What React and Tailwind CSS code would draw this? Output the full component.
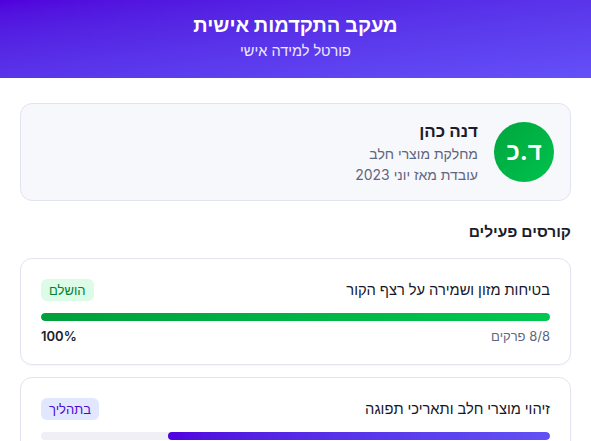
import React from 'react';

const courses = [
  {
    title: 'בטיחות מזון ושמירה על רצף הקור',
    status: 'הושלם',
    done: true,
    chapters: '8/8 פרקים',
    percent: 100,
  },
  {
    title: 'זיהוי מוצרי חלב ותאריכי תפוגה',
    status: 'בתהליך',
    done: false,
    chapters: '6/8 פרקים',
    percent: 75,
  },
];

const CourseCard = ({ course }) => (
  <div className="rounded-xl border border-[#e2e5ef] bg-white p-5 shadow-[0_1px_2px_rgba(20,20,60,0.04)]">
    <div className="flex items-center justify-between">
      <h3 className="text-[14.7px] font-medium text-[#16162a] leading-[22px]">{course.title}</h3>
      <span
        className={
          course.done
            ? 'rounded-md bg-[#dcfce7] px-2 py-[3px] text-[13px] leading-4 text-[#008236]'
            : 'rounded-md bg-[#e0e7ff] px-2 py-[3px] text-[13px] leading-4 text-[#4f08d8]'
        }
      >
        {course.status}
      </span>
    </div>
    <div className="mt-3 h-2 w-full overflow-hidden rounded-full bg-[#efeff5]">
      <div
        className={
          course.done
            ? 'h-full rounded-full bg-gradient-to-l from-[#00c850] to-[#00a03c]'
            : 'h-full rounded-full bg-gradient-to-l from-[#6250f5] to-[#5000de]'
        }
        style={{ width: `${course.percent}%` }}
      />
    </div>
    <div className="mt-[7px] flex items-center justify-between text-[13px] leading-4">
      <span className="text-[#5f6680]">{course.chapters}</span>
      <span className="font-semibold text-[#1c1c2b]">{course.percent}%</span>
    </div>
  </div>
);

export default function App() {
  return (
    <div dir="rtl" className="min-h-screen bg-white font-['Inter','Liberation_Sans',sans-serif]">
      <header className="bg-gradient-to-br from-[#5000dc] to-[#6450f8] pt-[11px] pb-[17px] text-center text-white">
        <h1 className="text-[20px] font-bold leading-7">מעקב התקדמות אישית</h1>
        <p className="mt-[2px] text-[14.5px] leading-5 text-white/90">פורטל למידה אישי</p>
      </header>

      <main className="px-5 pt-[25px]">
        <div className="flex items-center gap-4 rounded-xl border border-[#e0e4ee] bg-[#f7f8fc] px-4 py-[15px]">
          <div className="flex h-[60px] w-[60px] shrink-0 items-center justify-center rounded-full bg-gradient-to-br from-[#00a63e] to-[#00c24e] text-[24px] font-bold text-white">
            ד.כ
          </div>
          <div>
            <div className="text-[17px] font-bold leading-6 text-[#1c1c2b]">דנה כהן</div>
            <div className="text-[14px] leading-[21px] text-[#5f6680]">מחלקת מוצרי חלב</div>
            <div className="text-[14px] leading-[21px] text-[#5f6680]">עובדת מאז יוני 2023</div>
          </div>
        </div>

        <h2 className="mt-[19px] mb-[14px] text-[15.5px] font-semibold leading-6 text-[#1c1c2b]">קורסים פעילים</h2>

        <div className="space-y-3">
          {courses.map((course) => (
            <CourseCard key={course.title} course={course} />
          ))}
        </div>
      </main>
    </div>
  );
}
